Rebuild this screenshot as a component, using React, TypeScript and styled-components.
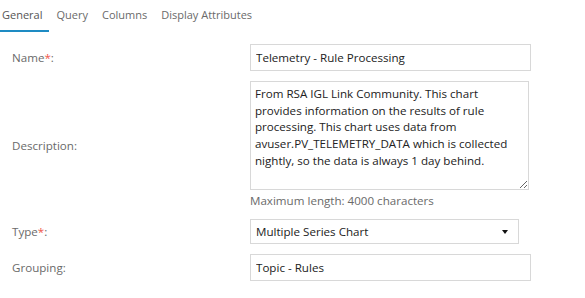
import React from 'react';
import styled, { createGlobalStyle } from 'styled-components';

const GlobalStyle = createGlobalStyle`
	html, body {
		margin: 0;
		padding: 0;
		background: #fff;
		font-family: "Open Sans", "Liberation Sans", sans-serif;
		overflow: hidden;
	}
`;

const Page = styled.div`
	width: 585px;
	height: 298px;
	overflow: hidden;
`;

const TabBar = styled.div`
	display: flex;
	margin-left: -5px;
	height: 32px;
`;

const Tab = styled.div<{ $active?: boolean }>`
	padding: 0 7px;
	font-size: 11px;
	line-height: 30px;
	color: ${p => (p.$active ? '#555' : '#6a6a6a')};
	border-bottom: 2px solid ${p => (p.$active ? '#1e8bc3' : 'transparent')};
	height: 30px;
`;

const FormGrid = styled.div`
	display: grid;
	grid-template-columns: 238px 281px;
	row-gap: 10px;
	align-items: center;
	padding-top: 12px;
	padding-left: 12px;
`;

const Label = styled.label`
	font-size: 11.6px;
	color: #6a6a6a;
`;

const Required = styled.span`
	color: #f0584a;
`;

const Field = styled.div`
	display: flex;
	flex-direction: column;
`;

const TextInput = styled.input`
	box-sizing: border-box;
	width: 281px;
	height: 27px;
	padding: 0 5px;
	border: 1px solid #d8d8d8;
	font-family: inherit;
	font-size: 11.6px;
	color: #222;
	outline: none;
`;

const TextArea = styled.textarea`
	box-sizing: border-box;
	width: 279px;
	height: 109px;
	padding: 4px 4px;
	border: 1px solid #d8d8d8;
	font-family: inherit;
	font-size: 11.6px;
	line-height: 16.7px;
	color: #222;
	outline: none;
	resize: vertical;
	margin: 0;
	display: block;
`;

const Hint = styled.div`
	margin-top: 2px;
	font-size: 11.6px;
	line-height: 17px;
	color: #6a6a6a;
`;

const SelectBox = styled.div`
	box-sizing: border-box;
	width: 269px;
	height: 25px;
	padding: 0 10px 0 5px;
	border: 1px solid #d8d8d8;
	display: flex;
	align-items: center;
	justify-content: space-between;
	font-size: 11.6px;
	color: #222;
`;

const Caret = styled.span`
	width: 0;
	height: 0;
	border-left: 3px solid transparent;
	border-right: 3px solid transparent;
	border-top: 4px solid #111;
	margin-top: 1px;
`;

const App: React.FC = () => {
	return (
		<Page>
			<GlobalStyle />
			<TabBar>
				<Tab $active>General</Tab>
				<Tab>Query</Tab>
				<Tab>Columns</Tab>
				<Tab>Display Attributes</Tab>
			</TabBar>
			<FormGrid>
				<Label htmlFor="name">
					Name<Required>*</Required>:
				</Label>
				<TextInput id="name" defaultValue="Telemetry - Rule Processing" />

				<Label htmlFor="description">Description:</Label>
				<Field>
					<TextArea
						id="description"
						defaultValue="From RSA IGL Link Community. This chart provides information on the results of rule processing. This chart uses data from avuser.PV_TELEMETRY_DATA which is collected nightly, so the data is always 1 day behind."
					/>
					<Hint>Maximum length: 4000 characters</Hint>
				</Field>

				<Label>
					Type<Required>*</Required>:
				</Label>
				<SelectBox>
					<span>Multiple Series Chart</span>
					<Caret />
				</SelectBox>

				<Label htmlFor="grouping">Grouping:</Label>
				<TextInput id="grouping" defaultValue="Topic - Rules" />
			</FormGrid>
		</Page>
	);
};

export default App;
